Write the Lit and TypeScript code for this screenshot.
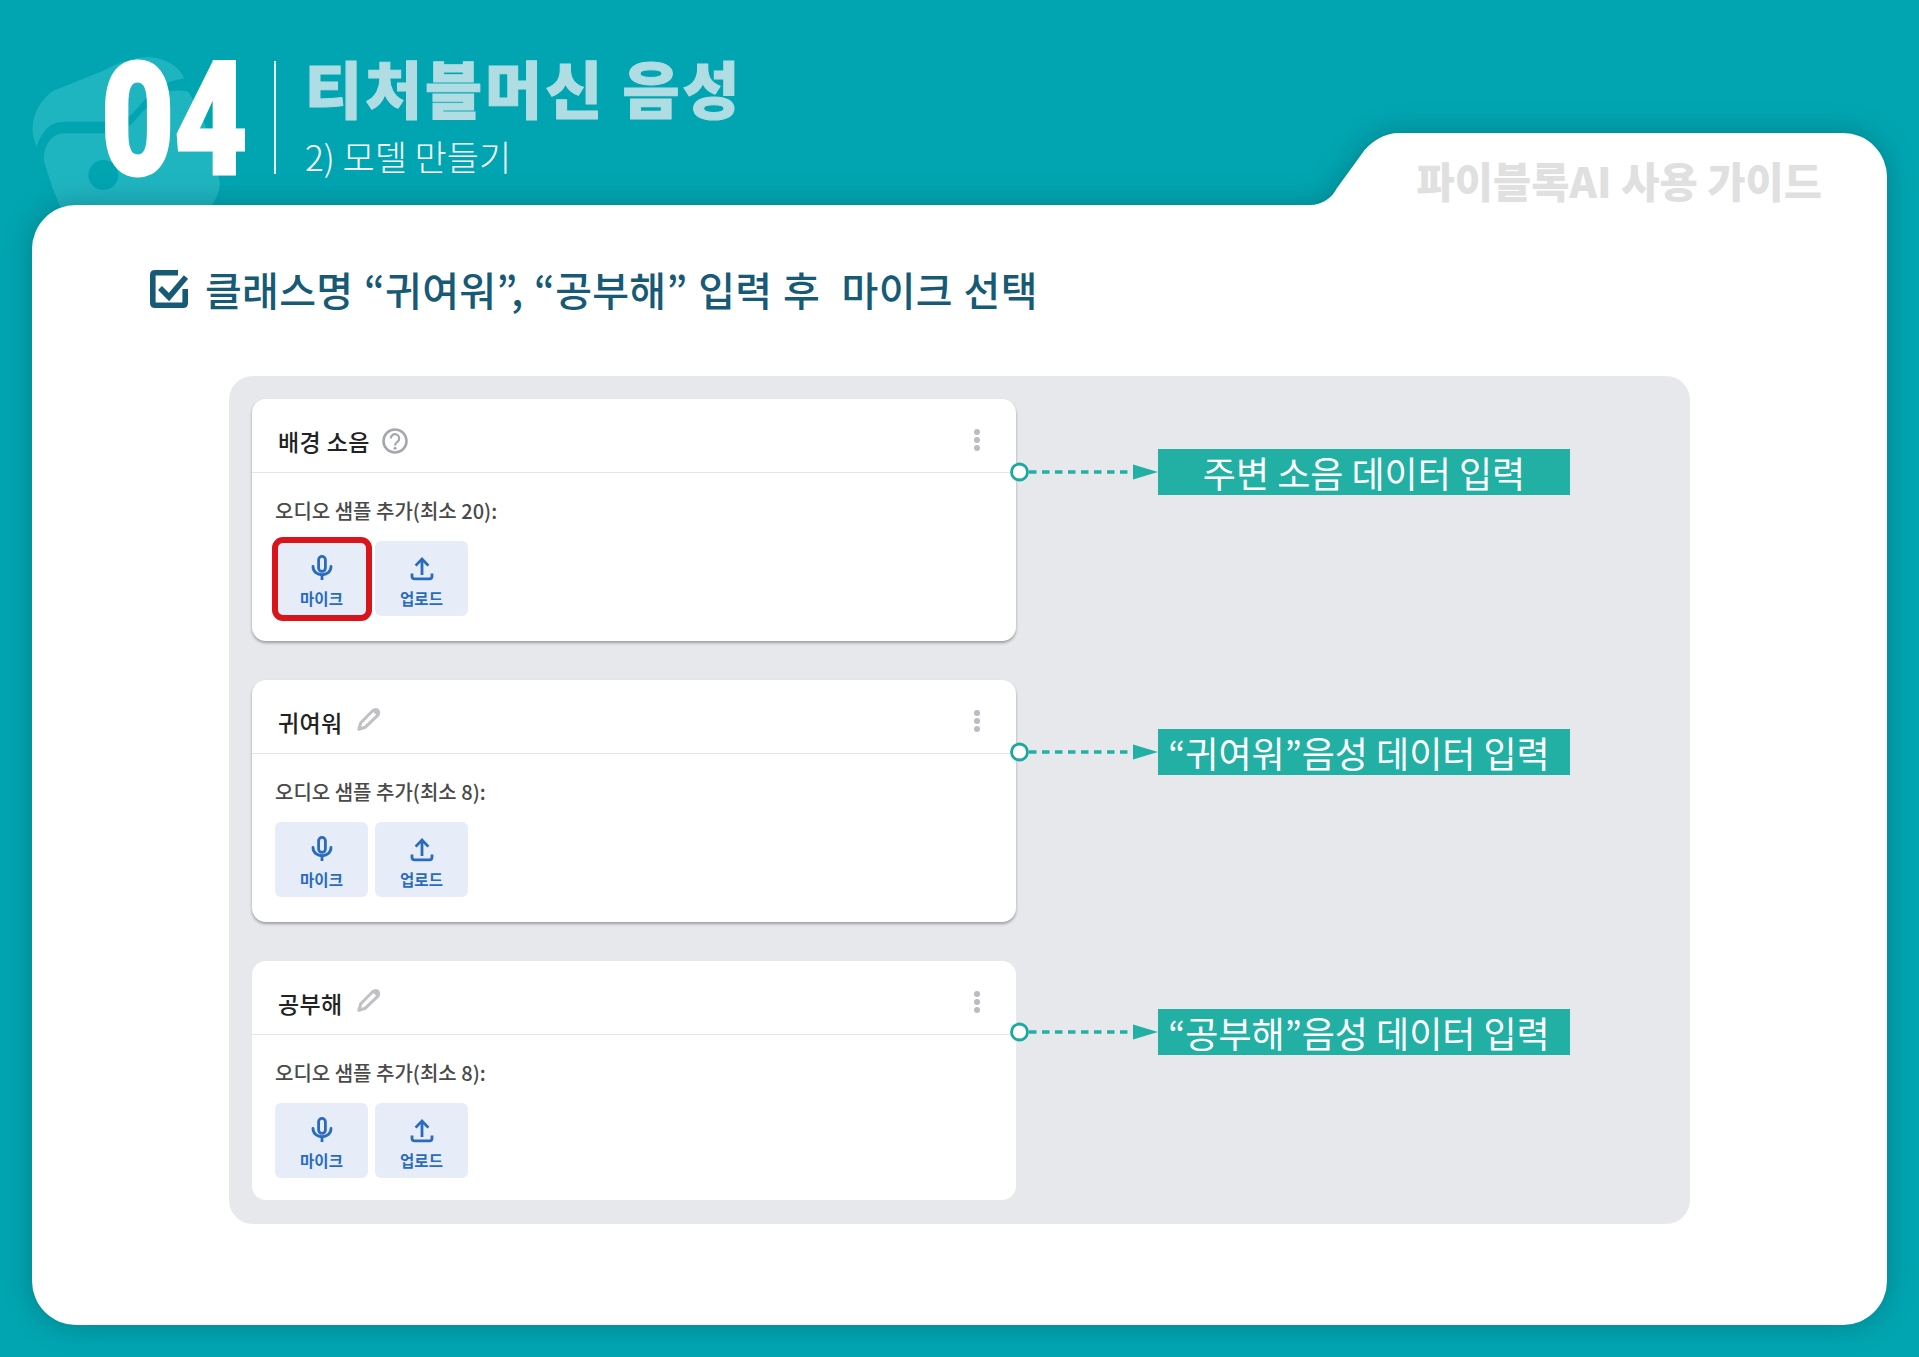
import { LitElement, html, css, svg } from 'lit';
import { customElement } from 'lit/decorators.js';

interface CardData {
  title: string;
  icon: 'help' | 'pencil';
  min: number;
  callout: string;
  calloutTop: number;
  highlight?: boolean;
  last?: boolean;
  quoted?: boolean;
}

const CARDS: CardData[] = [
  { title: '배경 소음', icon: 'help', min: 20, callout: '주변 소음 데이터 입력', calloutTop: 50, highlight: true },
  { title: '귀여워', icon: 'pencil', min: 8, callout: '“귀여워”음성 데이터 입력', calloutTop: 49, quoted: true },
  { title: '공부해', icon: 'pencil', min: 8, callout: '“공부해”음성 데이터 입력', calloutTop: 48, last: true, quoted: true },
];

const micIcon = svg`<svg class="ico" viewBox="0 0 24 26" width="24" height="26" fill="none" stroke="currentColor" stroke-width="2.8" stroke-linecap="round">
  <rect x="8.600" y="1.400" width="6.800" height="15" rx="3.400"/>
  <path d="M3 11.500c0 11 18 11 18 0"/>
  <path d="M12 20v5" stroke-linecap="butt"/>
</svg>`;

const uploadIcon = svg`<svg class="ico" viewBox="0 0 24 26" width="24" height="26" fill="none" stroke="currentColor" stroke-width="2.8">
  <path d="M12 20V5"/>
  <path d="M5.600 10.600L12 4l6.400 6.600"/>
  <path d="M2 18.500v2.800q0 2.600 2.600 2.600h14.800q2.600 0 2.600-2.600v-2.800"/>
</svg>`;

const helpIcon = svg`<svg class="help" viewBox="0 0 26 26" width="26" height="26" fill="none" stroke="#a4a8ae" stroke-width="2.600">
  <circle cx="13" cy="13" r="11.500"/>
  <path d="M8.800 10.400a4.200 4.200 0 1 1 6.600 3.400c-1.600 1.100-2.400 1.800-2.400 3.600" stroke-width="2.200"/>
  <circle cx="13" cy="20.200" r="1.500" fill="#a4a8ae" stroke="none"/>
</svg>`;

const pencilIcon = svg`<svg class="pencil" viewBox="0 0 24 24" width="24" height="24" fill="none" stroke="#bfc1c5" stroke-width="3" stroke-linejoin="round">
  <path d="M1.800 22.200L3.800 15.800 16.400 3 21.200 7.800 8.400 20.200Z"/>
  <path d="M15.400 2.800Q18.400-.6 21.800 2.200 24.800 5.400 21.400 8.800Z" fill="#bfc1c5" stroke="none"/>
</svg>`;

const connector = svg`<svg class="connector" viewBox="0 0 148 46" width="148" height="46" fill="none">
  <path d="M19 23H120" stroke="#22b0a5" stroke-width="3.400" stroke-dasharray="7.500 5.500"/>
  <path d="M123 15.500L148 23 123 30.500Z" fill="#22b0a5"/>
  <circle cx="9.500" cy="23" r="8" fill="#fff" stroke="#1aa99f" stroke-width="2.800"/>
</svg>`;

@customElement('app-root')
export class AppRoot extends LitElement {
  static styles = css`
    :host {
      display: block;
      position: relative;
      width: 1919px;
      height: 1357px;
      overflow: hidden;
      background: #00a5b1;
      font-family: 'Noto Sans CJK KR', 'Noto Sans', sans-serif;
    }

    .logo {
      position: absolute;
      left: 20px;
      top: 50px;
    }

    .sheet-shape {
      position: absolute;
      left: 0;
      top: 0;
      filter: drop-shadow(0 0 14px rgba(0, 70, 80, 0.38));
    }

    .header {
      position: relative;
      display: flex;
      align-items: flex-start;
      box-sizing: border-box;
      height: 205px;
      padding: 57px 97px 0 101px;
    }

    .number {
      width: 173px;
      height: 120px;
      flex: none;
    }

    .number span {
      display: inline-block;
      margin-top: 3px;
      font-family: Roboto, sans-serif;
      font-weight: 900;
      font-size: 158px;
      line-height: 120px;
      color: #fff;
      -webkit-text-stroke: 3px #fff;
      transform: scaleX(0.8);
      transform-origin: left center;
    }

    .divider {
      width: 2px;
      height: 113px;
      margin-top: 4px;
      background: #e9f6f7;
      flex: none;
    }

    .titles {
      margin-left: 29px;
    }

    .main-title {
      margin: 0;
      font-size: 62px;
      font-weight: 900;
      line-height: 60px;
      letter-spacing: 3px;
      color: #b0dde4;
      -webkit-text-stroke: 1px #b0dde4;
    }

    .sub-title {
      margin: 17px 0 0;
      font-size: 35px;
      font-weight: 300;
      line-height: 44px;
      color: #fff;
    }

    .guide {
      margin-left: auto;
      margin-top: 97px;
      font-size: 41.600px;
      font-weight: 900;
      line-height: 52px;
      color: #e0e0e0;
    }

    .sheet {
      position: relative;
      padding-left: 150px;
    }

    .heading {
      display: flex;
      align-items: center;
      gap: 17px;
      height: 60px;
      margin-top: 54px;
      font-size: 40px;
      font-weight: 500;
      letter-spacing: 0.3px;
      word-spacing: 1.400px;
      color: #175a76;
    }

    .board {
      box-sizing: border-box;
      width: 1461px;
      height: 848px;
      margin: 57px 0 0 79px;
      padding: 23px 0 0 23px;
      border-radius: 24px;
      background: #e6e8ec;
      display: flex;
      flex-direction: column;
      gap: 39px;
    }

    .row {
      display: flex;
      align-items: flex-start;
    }

    .card {
      box-sizing: border-box;
      width: 764px;
      height: 242px;
      border-radius: 14px;
      background: #fff;
      box-shadow: 0 2px 3px rgba(0, 0, 0, 0.32);
      flex: none;
    }

    .card.last {
      height: 239px;
      box-shadow: none;
    }

    .card-head {
      box-sizing: border-box;
      display: flex;
      align-items: center;
      height: 74px;
      padding: 10px 36px 0 26px;
      border-bottom: 1px solid #e3e5e8;
    }

    .card-title {
      font-size: 23px;
      font-weight: 500;
      letter-spacing: 0.4px;
      color: #222;
    }

    .help {
      margin-left: 12px;
    }

    .pencil {
      margin: -6px 0 0 14px;
    }

    .dots {
      margin-left: auto;
      margin-top: -2px;
      display: flex;
      flex-direction: column;
      gap: 2px;
    }

    .dots i {
      width: 6px;
      height: 6px;
      border-radius: 50%;
      background: #b9bcc3;
    }

    .card-body {
      padding: 25px 23px 0;
    }

    .label {
      font-size: 20px;
      font-weight: 500;
      line-height: 26px;
      color: #4a4a4a;
    }

    .buttons {
      display: flex;
      gap: 7px;
      margin-top: 17px;
    }

    .btn {
      position: relative;
      box-sizing: border-box;
      display: flex;
      flex-direction: column;
      align-items: center;
      gap: 7px;
      width: 93px;
      height: 75px;
      padding-top: 14px;
      border-radius: 6px;
      background: #e6edf8;
      color: #2a6bbd;
      font-size: 15.500px;
      font-weight: 700;
      line-height: 20px;
    }

    .btn.highlight::after {
      content: '';
      position: absolute;
      left: -3px;
      top: -4px;
      right: -4px;
      bottom: -5px;
      border: 6.500px solid #d9141b;
      border-radius: 11px;
    }

    .connector {
      flex: none;
      margin-left: -6px;
    }

    .callout {
      box-sizing: border-box;
      display: flex;
      align-items: center;
      justify-content: center;
      width: 412px;
      height: 46px;
      background: #22b0a5;
      color: #fff;
      font-size: 36px;
      font-weight: 400;
      line-height: 46px;
      white-space: nowrap;
    }

    .callout.quoted {
      padding-right: 10px;
    }

    .link {
      display: flex;
      flex: none;
    }
  `;

  private renderCard(c: CardData) {
    return html`
      <div class="row">
        <div class="card ${c.last ? 'last' : ''}">
          <div class="card-head">
            <span class="card-title">${c.title}</span>
            ${c.icon === 'help' ? helpIcon : pencilIcon}
            <div class="dots"><i></i><i></i><i></i></div>
          </div>
          <div class="card-body">
            <div class="label">오디오 샘플 추가(최소 ${c.min}):</div>
            <div class="buttons">
              <div class="btn ${c.highlight ? 'highlight' : ''}">${micIcon}<span>마이크</span></div>
              <div class="btn">${uploadIcon}<span>업로드</span></div>
            </div>
          </div>
        </div>
        <div class="link" style="margin-top:${c.calloutTop}px">
          ${connector}
          <div class="callout ${c.quoted ? 'quoted' : ''}">${c.callout}</div>
        </div>
      </div>
    `;
  }

  render() {
    return html`
      <svg class="logo" width="240" height="160" viewBox="0 0 720 480" fill="#1fb5c0">
        <path d="M40 262C30 200 60 150 100 122L250 62C300 35 350 18 395 22 450 30 480 55 492 85 470 90 420 100 395 125L340 188C320 210 280 215 250 215L130 215C95 215 65 240 50 290Z"/>
        <path fill-rule="evenodd" d="M72 335C70 285 95 252 130 250L250 250C290 250 330 235 350 205L415 135C440 120 475 118 505 125 535 170 560 230 575 280L600 400C598 430 585 450 570 480L125 480 100 420ZM250 330a45 45 0 1 0 .1 0Z"/>
      </svg>
      <svg class="sheet-shape" width="1919" height="1357" viewBox="0 0 1919 1357">
        <path fill="#fff" d="M32 249A44 44 0 0 1 76 205L1310 205C1322 205 1332 198 1337 188L1361 155C1370 141 1385 133 1399 133L1843 133A44 44 0 0 1 1887 177L1887 1281A44 44 0 0 1 1843 1325L76 1325A44 44 0 0 1 32 1281Z"/>
      </svg>
      <div class="header">
        <div class="number"><span>04</span></div>
        <div class="divider"></div>
        <div class="titles">
          <h1 class="main-title">티처블머신 음성</h1>
          <p class="sub-title">2) 모델 만들기</p>
        </div>
        <div class="guide">파이블록AI 사용 가이드</div>
      </div>
      <div class="sheet">
        <div class="heading">
          <svg viewBox="0 0 38 38" width="38" height="38" fill="none" stroke="#175a76" stroke-width="5.600">
            <path d="M28 2.800H5Q2.800 2.800 2.800 5V33Q2.800 35.200 5 35.200H33Q35.200 35.200 35.200 33V19"/>
            <path d="M10 18L19 27 36 7"/>
          </svg>
          <span>클래스명 “귀여워”, “공부해” 입력 후&nbsp; 마이크 선택</span>
        </div>
        <div class="board">${CARDS.map((c) => this.renderCard(c))}</div>
      </div>
    `;
  }
}

declare global {
  interface HTMLElementTagNameMap {
    'app-root': AppRoot;
  }
}
